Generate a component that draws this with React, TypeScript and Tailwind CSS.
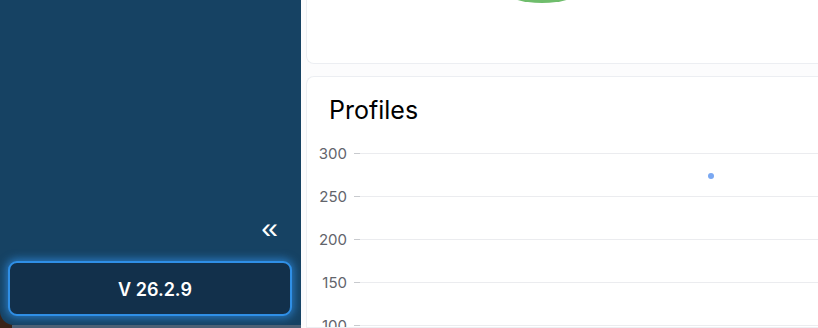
import React from "react";

export default function App() {
  const ticks = ["300", "250", "200", "150", "100"];
  return (
    <div className="w-[818px] h-[328px] overflow-hidden flex bg-[#4b6075]" style={{ fontFamily: "Inter, 'Noto Sans', sans-serif" }}>
      <div className="w-[301px] h-[328px] shrink-0 bg-[#3a2418] relative">
        <aside className="w-[301px] h-[325px] bg-[#164263] rounded-bl-[14px] flex flex-col items-stretch justify-end px-[8px] pb-[9px]">
          <div className="flex justify-end pr-[15px] mb-[18px]">
            <span className="text-white text-[30px] leading-none font-normal" style={{ fontFamily: "'Liberation Sans', sans-serif" }}>«</span>
          </div>
          <button className="h-[55px] w-[284px] rounded-[9px] bg-[#12304b] border-[2px] border-[#2f8fe6] shadow-[0_0_8px_2px_rgba(47,143,230,0.7)] text-white text-[18px] font-semibold flex items-center justify-center pl-[10px] pt-[2px]">
            V 26.2.9
          </button>
        </aside>
        <div className="absolute left-[12px] right-0 bottom-0 h-[3px] bg-[#4b6075]" />
      </div>
      <main className="flex-1 h-[328px] bg-[#fcfcfd] flex flex-col pl-[5px] gap-[12px]">
        <div className="h-[65px] shrink-0 -mt-[1px] bg-white border border-[#eceef2] border-t-0 border-r-0 rounded-bl-[8px] relative overflow-hidden">
          <div className="absolute left-[198px] -top-[20px] w-[74px] h-[24px] rounded-[50%] bg-[#6fbd6c]" />
        </div>
        <div className="flex-1 min-h-0 bg-white border border-[#eceef2] border-r-0 rounded-tl-[8px] flex flex-col overflow-hidden">
          <div className="pl-[22px] pt-[18px] text-[25px] leading-[30px] text-black shrink-0">Profiles</div>
          <div className="relative shrink-0 mt-[22px]">
            <div className="flex flex-col gap-[31px]">
              {ticks.map((t) => (
                <div key={t} className="flex items-center h-[12px] shrink-0">
                  <span className="w-[40px] text-right text-[15px] leading-none text-[#62646b]">{t}</span>
                  <span className="ml-[7px] w-[6px] h-px bg-[#c8cace]" />
                  <span className="flex-1 h-px bg-[#ebecef]" />
                </div>
              ))}
            </div>
            <div className="absolute left-[401px] top-[26px] w-[6px] h-[6px] rounded-full bg-[#7aa8f2]" />
          </div>
        </div>
      </main>
    </div>
  );
}
